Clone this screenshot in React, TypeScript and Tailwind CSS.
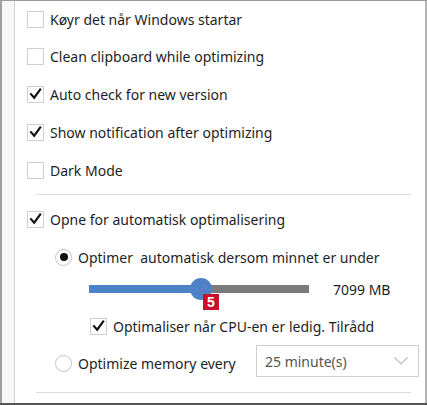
import React from 'react';

const Check = () => (
  <svg viewBox="0 0 16 16" className="w-[16px] h-[16px]">
    <path d="M3.2 8.2 L6.6 12 L13 3.2" fill="none" stroke="#111" strokeWidth="2.3" strokeLinecap="square" strokeLinejoin="miter" />
  </svg>
);

const CheckBox: React.FC<{ checked?: boolean }> = ({ checked }) => (
  <div className="w-[17px] h-[17px] border border-[#cfcfcf] bg-white flex items-center justify-center shrink-0">
    {checked && <Check />}
  </div>
);

const Radio: React.FC<{ checked?: boolean }> = ({ checked }) => (
  <div className="w-[17px] h-[17px] rounded-full border border-[#c4c4c4] bg-white flex items-center justify-center shrink-0">
    {checked && <div className="w-[8px] h-[8px] rounded-full bg-[#111]" />}
  </div>
);

const Row: React.FC<{ label: string; checked?: boolean; first?: boolean }> = ({ label, checked, first }) => (
  <div className={`${first ? 'h-[36px]' : 'h-[38px]'} shrink-0 flex items-center gap-[6px] pl-[12px]`}>
    <CheckBox checked={checked} />
    <span>{label}</span>
  </div>
);

export default function App() {
  return (
    <div
      className="w-[427px] h-[405px] flex bg-white border-t border-[#9a9a9a] border-b-2 border-b-[#555] text-[14px] text-[#1e1e1e] overflow-hidden"
      style={{ fontFamily: '"Noto Sans", "Open Sans", sans-serif' }}
    >
      <div className="w-[15px] shrink-0 bg-[#f7f7f7] border-l-2 border-l-[#a0a0a0] border-r border-r-[#cfcfcf]" />
      <div className="flex-1 flex flex-col border-r-2 border-r-[#b5b5b5]">
        <Row label="Køyr det når Windows startar" first />
        <Row label="Clean clipboard while optimizing" />
        <Row label="Auto check for new version" checked />
        <Row label="Show notification after optimizing" checked />
        <Row label="Dark Mode" />
        <div className="mt-[5px] ml-[21px] mr-[14px] h-px shrink-0 bg-[#dcdcdc]" />
        <div className="mt-[5px] shrink-0">
          <Row label="Opne for automatisk optimalisering" checked />
        </div>
        <div className="h-[38px] shrink-0 flex items-center gap-[6px] pl-[40px]">
          <Radio checked />
          <span>Optimer&nbsp; automatisk dersom minnet er under</span>
        </div>
        <div className="h-[26px] shrink-0 flex items-center pl-[74px]">
          <div className="w-[220px] h-[8px] flex items-center relative">
            <div className="w-[112px] h-full bg-[#4d82c6]" />
            <div className="flex-1 h-full bg-[#7b7b7b]" />
            <div className="absolute left-[101px] top-1/2 -translate-y-1/2 w-[22px] h-[22px] rounded-full bg-[#4d82c6]" />
            <div
              className="absolute left-[114px] top-[9px] w-[16px] h-[16px] bg-[#c8102e] text-white font-bold text-[14px] leading-[16px] flex items-center justify-center"
              style={{ fontFamily: '"Liberation Sans", sans-serif' }}
            >
              5
            </div>
          </div>
          <span className="ml-[24px]">7099 MB</span>
        </div>
        <div className="h-[43px] shrink-0 flex items-center gap-[6px] pl-[75px] pt-[5px]">
          <CheckBox checked />
          <span>Optimaliser når CPU-en er ledig. Tilrådd</span>
        </div>
        <div className="h-[32px] shrink-0 flex items-center pl-[40px]">
          <div className="flex items-center gap-[6px] w-[201px] pt-[4px]">
            <Radio />
            <span>Optimize memory every</span>
          </div>
          <div className="w-[163px] h-[32px] border border-[#cfcfcf] flex items-center justify-between pl-[8px] pr-[10px] text-[#555]">
            <span>25 minute(s)</span>
            <svg viewBox="0 0 14 8" className="w-[14px] h-[8px]">
              <path d="M0.5 0.5 L7 7 L13.5 0.5" fill="none" stroke="#bdbdbd" strokeWidth="1.2" />
            </svg>
          </div>
        </div>
        <div className="mt-[15px] ml-[21px] mr-[14px] h-px shrink-0 bg-[#dcdcdc]" />
      </div>
    </div>
  );
}
